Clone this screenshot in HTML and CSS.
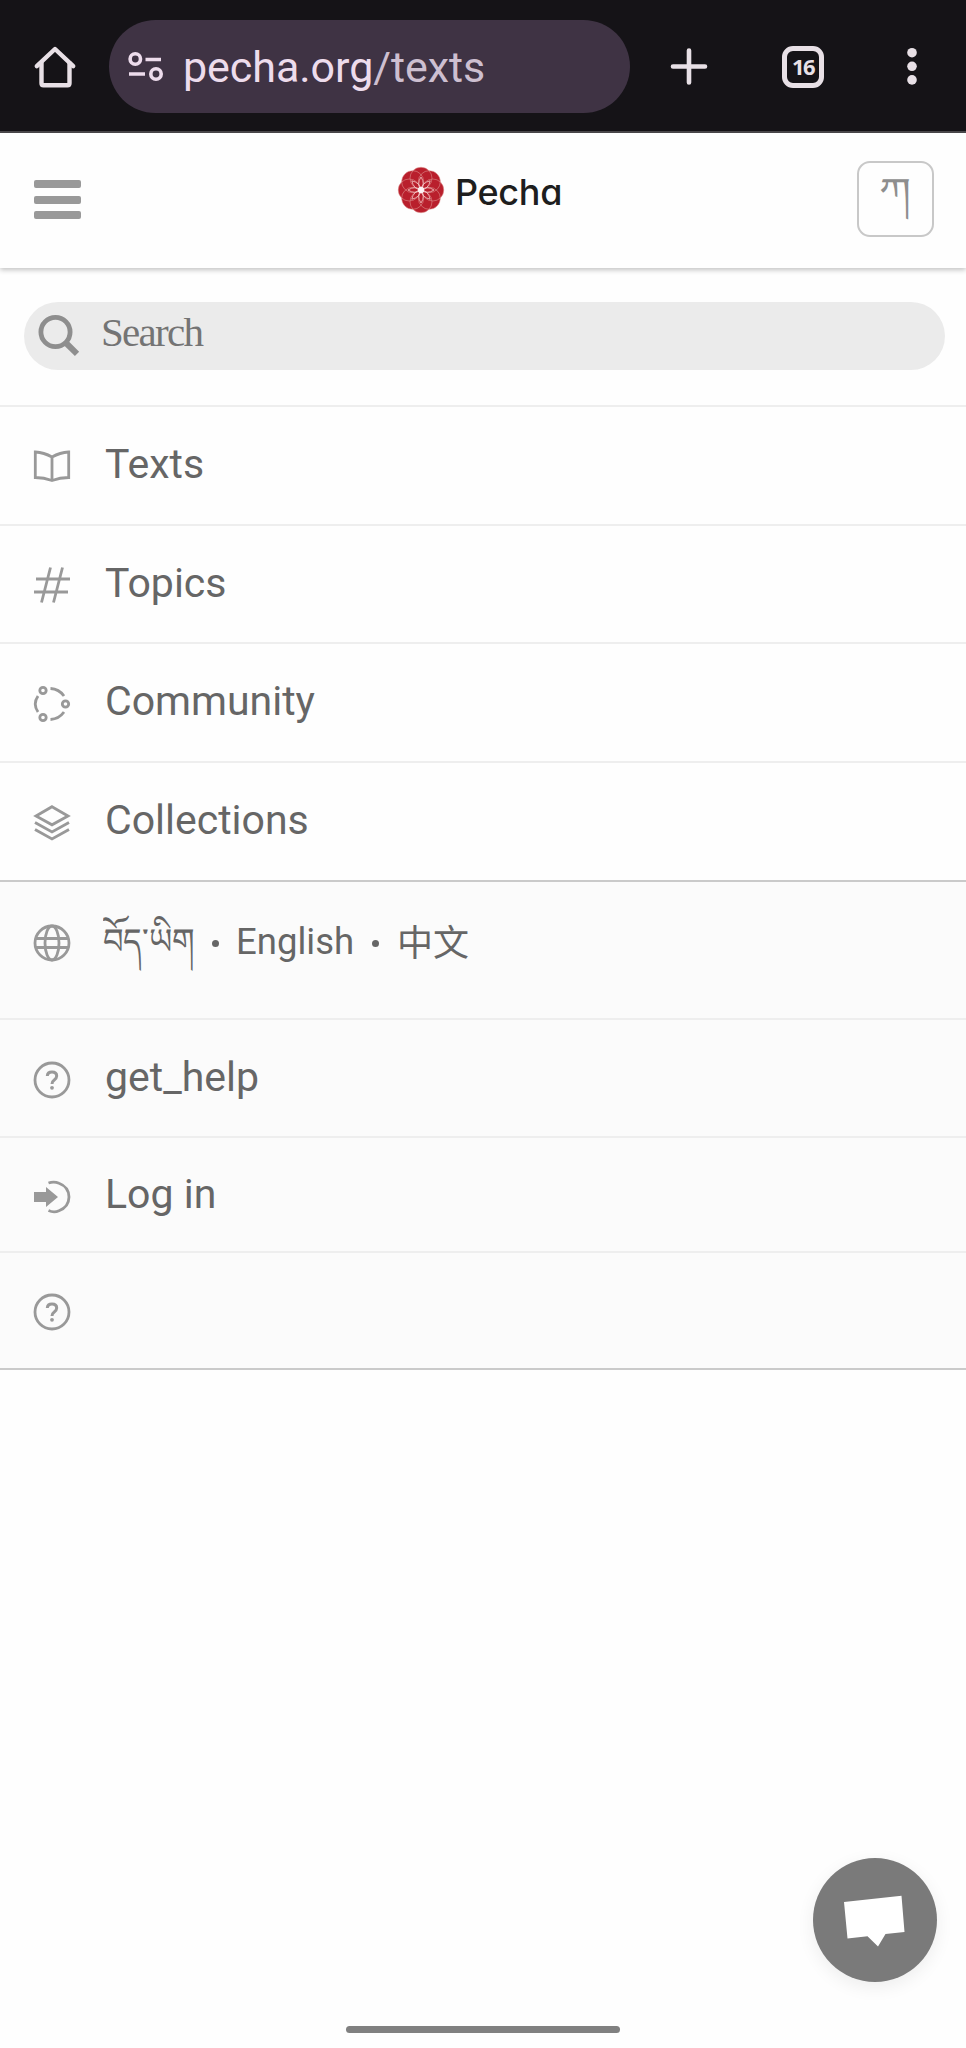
FILE: index.html
```html
<!DOCTYPE html>
<html lang="en">
<head>
<meta charset="utf-8">
<title>Pecha</title>
<link rel="stylesheet" href="styles.css">
</head>
<body>
<div class="browser">
  <svg class="home" width="42" height="42" viewBox="0 0 42 42" fill="none" stroke="#e8e0e6" stroke-width="4.4" stroke-linecap="round" stroke-linejoin="round"><path d="M2.8 20.2 21 3 39.2 20.2"/><path d="M7.500 17v20.3q0 2 2 2h24q2 0 2-2V17"/></svg>
  <div class="omnibox">
    <svg width="36" height="30" viewBox="0 0 36 30" fill="none" stroke="#eddcec" stroke-width="3.6"><circle cx="7.3" cy="7" r="5.2"/><path d="M17.5 7.5H33M1 22H17"/><circle cx="28" cy="22" r="5.2"/></svg>
    <span class="url">pecha.org<span class="path">/texts</span></span>
  </div>
  <svg class="plus" width="38" height="38" viewBox="0 0 38 38" stroke="#e8e0e6" stroke-width="4.6" stroke-linecap="round"><path d="M19 2.500v32M3 18.500h32"/></svg>
  <div class="tabs">16</div>
  <svg class="more" width="10" height="38" viewBox="0 0 10 38" fill="#e8e0e6"><circle cx="5" cy="5.7" r="4.8"/><circle cx="5" cy="19.3" r="4.8"/><circle cx="5" cy="32.9" r="4.8"/></svg>
</div>
<header class="header">
  <div class="burger"><i></i><i></i><i></i></div>
  <div class="brand">
    <svg width="46" height="46" viewBox="-23 -23 46 46">
      <defs>
        <g id="lobes"><circle cy="-11.8" r="11"/><circle cy="11.8" r="11"/><circle cx="-11.8" r="11"/><circle cx="11.8" r="11"/></g>
        <g id="rose"><use href="#lobes"/><use href="#lobes" transform="rotate(45)"/></g>
        <path id="petal" d="M0 0Q-4.6-6 0-13Q4.6-6 0 0"/>
        <g id="star"><use href="#petal"/><use href="#petal" transform="rotate(45)"/><use href="#petal" transform="rotate(90)"/><use href="#petal" transform="rotate(135)"/></g>
      </defs>
      <circle r="19.500" fill="#b91f2c"/>
      <use href="#rose" fill="#b91f2c"/>
      <g fill="none" stroke="#f3c5c4">
        <use href="#rose" stroke="#e3a09c" stroke-width=".5"/>
        <use href="#star" stroke-width=".8"/><use href="#star" transform="rotate(180)" stroke-width=".8"/>
      </g>
      <circle r="3.2" fill="#fff" opacity=".85"/>
    </svg>
    <span>Pecha</span>
  </div>
  <div class="script-toggle" lang="bo"><span>ཀ</span></div>
</header>
<div class="search">
  <svg width="42" height="42" viewBox="0 0 42 42" fill="none" stroke="#8e8e8e"><circle cx="17.5" cy="17" r="14.6" stroke-width="4.8"/><path d="M27.5 27.500 39 38.8" stroke-width="6"/></svg>
  <span>Search</span>
</div>
<nav class="menu">
  <div class="row"><svg class="icon" viewBox="0 0 36 36"><path d="M1.300 3Q10 3.500 18 8Q26 3.500 34.700 3V28.500Q26 28.500 18 31.500Q10 28.500 1.300 28.500ZM18 8V31"/></svg><span>Texts</span></div>
  <div class="row short"><svg class="icon" viewBox="0 0 36 36"><path d="M16.500 .5 7.500 35.500M28.500 .5 19.500 35.500M2 12H36M0 25H34"/></svg><span>Topics</span></div>
  <div class="row"><svg class="icon" viewBox="0 0 36 36"><circle cx="9" cy="4.500" r="3.200"/><circle cx="31.500" cy="18" r="3.200"/><circle cx="9" cy="31.500" r="3.200"/><path d="M4 10Q-1.500 18 4 26M16.500 2.500Q25 3 30 10M16.500 33.500Q25 33 30 26"/></svg><span>Community</span></div>
  <div class="row last"><svg class="icon" viewBox="0 0 36 36"><path d="M18 1.700 34 11 18 19.800 2 11ZM1 17.500 18 27 35 17.500M1 24.500 18 34 35 24.500"/></svg><span>Collections</span></div>
</nav>
<div class="menu account">
  <div class="row langs">
    <svg class="icon" viewBox="0 0 36 36"><circle cx="18" cy="18" r="17"/><ellipse cx="18" cy="18" rx="7" ry="17"/><path d="M2 13.500H34M2 22.500H34"/></svg>
    <span class="bo" lang="bo">བོད་ཡིག</span><i class="dot"></i><span class="en">English</span><i class="dot"></i><span class="zh" lang="zh">中文</span>
  </div>
  <div class="row"><svg class="icon" viewBox="0 0 36 36"><circle cx="18" cy="18" r="17"/><path d="M13.300 14Q13.500 10 18 10Q22.700 10 22.700 14Q22.700 16.200 20 18.200Q18 19.600 18 22" stroke-width="3"/><circle class="solid" cx="18" cy="25.800" r="1.900"/></svg><span>get_help</span></div>
  <div class="row login"><svg class="icon" viewBox="0 0 36 36"><path d="M14.500 4Q20 2 25 4.300Q34.800 8 35 18Q34.800 28 25 31.700Q20 34 14.500 31.500"/><path class="solid" d="M0 13H12V8L24 18 12 28V23H0Z"/></svg><span>Log in</span></div>
  <div class="row end"><svg class="icon" viewBox="0 0 36 36"><circle cx="18" cy="18" r="17"/><path d="M13.300 14Q13.500 10 18 10Q22.700 10 22.700 14Q22.700 16.200 20 18.200Q18 19.600 18 22" stroke-width="3"/><circle class="solid" cx="18" cy="25.800" r="1.900"/></svg></div>
</div>
<div class="chat"><svg width="62" height="54" viewBox="0 0 62 54" fill="#fff"><path d="M0 9 57.500 2.700 60.500 39 41.500 41 34 53.500 23.500 43.200 3.500 45.500Z"/></svg></div>
<div class="gesture"></div>
</body>
</html>
```
FILE: styles.css
```css
* { box-sizing: border-box; }
body { margin: 0; height: 2048px; background: #fefefe; font-family: Roboto, sans-serif; color: #666; overflow: hidden; }
svg { display: block; flex: none; overflow: visible; }

.browser { height: 133px; background: #151317; border-bottom: 2px solid #4b494c; display: flex; align-items: center; padding: 2px 0 0 34px; }
.omnibox { width: 521px; height: 93px; margin-left: 33px; border-radius: 47px; background: #3f3344; display: flex; align-items: center; padding-left: 19px; }
.url { margin-left: 19px; font-size: 43px; line-height: 60px; color: #eddcec; white-space: nowrap; letter-spacing: -.05px; }
.path { color: #cdbfd0; }
.plus { margin-left: 40px; }
.tabs { width: 42px; height: 42px; margin-left: 74px; border: 5px solid #e8e0e6; border-radius: 11px; color: #e8e0e6; font: 700 22px/31px "Open Sans", sans-serif; text-align: center; letter-spacing: -1.500px; }
.more { margin-left: 83px; margin-bottom: 1px; }

.header { height: 135px; background: #fefefe; box-shadow: 0 2px 5px rgba(0,0,0,.24); display: flex; justify-content: space-between; align-items: center; padding: 0 32px 0 34px; }
.burger { width: 47px; display: flex; flex-direction: column; gap: 7.500px; padding-bottom: 2px; }
.burger i { height: 8px; border-radius: 2px; background: #999; }
.brand { display: flex; align-items: center; gap: 11px; padding-bottom: 21px; margin-left: 22px; color: #1e1e1e; font: 500 36px/44px Inter, sans-serif; font-feature-settings: "cv11"; letter-spacing: -.3px; }
.brand span { padding-top: 4px; }
.script-toggle { width: 77px; height: 76px; border: 2px solid #c8c8c8; border-radius: 13px; margin-bottom: 4px; display: flex; align-items: center; justify-content: center; font-size: 35px; color: #8e8e8e; }
.script-toggle span { transform: scaleX(1.300); padding-top: 5px; }

.search { height: 68px; margin: 34px 21px 35px 24px; border-radius: 34px; background: #ebebeb; display: flex; align-items: center; padding-left: 14px; }
.search span { margin-left: 21px; font: 41px/60px "Liberation Serif", serif; letter-spacing: -1.700px; color: #747474; padding-bottom: 8px; }

.row { height: 119px; border-top: 2px solid #eee; display: flex; align-items: center; padding: 0 0 1px 34px; font-size: 41px; line-height: 60px; white-space: nowrap; }
.row.short { height: 118px; }
.icon { width: 36px; height: 36px; margin-top: 3px; fill: none; stroke: #999; stroke-width: 2.800; }
.icon .solid { fill: #999; stroke: none; }
.icon + span { margin-left: 35px; }
.row > span { padding-bottom: 2px; }
.row.last { height: 119px; }
.account { background: #fbfbfb; border-top: 2px solid #cacaca; border-bottom: 2px solid #cacaca; }
.account .row { height: 118px; }
.account .row .icon { margin-top: 4px; }
.account .row.langs { height: 136px; border-top: 0; font-size: 36.500px; padding-bottom: 16px; }
.account .row.langs .icon { margin-top: 2px; }
.account .row.login { height: 115px; }
.account .row.login .icon { margin-top: 5px; }
.account .row.login > span { padding-bottom: 0; }
.account .row.end { height: 117px; }
.row.langs .bo { margin-left: 33px; width: 91px; font-size: 36px; transform: scaleX(.890); transform-origin: left; padding-bottom: 0; }
.row.langs .en, .row.langs .zh { padding-bottom: 0; }
.dot { width: 7px; height: 7px; border-radius: 50%; background: #666; margin-left: 18px; margin-top: 2px; }
.en { margin-left: 17px; }
.row.langs .zh { margin-left: 18px; font: 400 36px/60px "Noto Sans CJK SC", sans-serif; padding-bottom: 5px; }

.chat { position: absolute; left: 813px; top: 1858px; width: 124px; height: 124px; border-radius: 50%; background: #7a7a7a; box-shadow: 0 5px 18px rgba(0,0,0,.07); display: flex; align-items: center; justify-content: center; }
.gesture { position: absolute; left: 346px; top: 2026px; width: 274px; height: 7px; border-radius: 4px; background: #808080; }
```
